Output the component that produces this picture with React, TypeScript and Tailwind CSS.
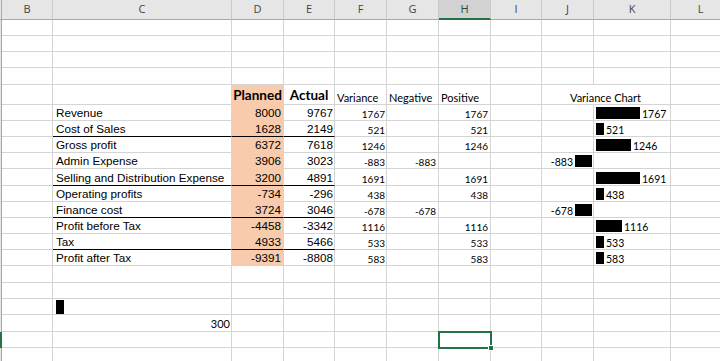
import React from "react";

type Line = { label: string; planned: number; actual: number; rule?: boolean };

const LINES: Line[] = [
  { label: "Revenue", planned: 8000, actual: 9767 },
  { label: "Cost of Sales", planned: 1628, actual: 2149, rule: true },
  { label: "Gross profit", planned: 6372, actual: 7618 },
  { label: "Admin Expense", planned: 3906, actual: 3023 },
  { label: "Selling and Distribution Expense", planned: 3200, actual: 4891, rule: true },
  { label: "Operating profits", planned: -734, actual: -296 },
  { label: "Finance cost", planned: 3724, actual: 3046, rule: true },
  { label: "Profit before Tax", planned: -4458, actual: -3342 },
  { label: "Tax", planned: 4933, actual: 5466, rule: true },
  { label: "Profit after Tax", planned: -9391, actual: -8808 },
];

// one block per 300 of variance
const SCALE = 300;

const LETTERS = ["", "B", "C", "D", "E", "F", "G", "H", "I", "J", "K", "L"];

const COL_W = [
  "w-[2px]",
  "w-[51px]",
  "w-[179px]",
  "w-[52px]",
  "w-[51px]",
  "w-[52px]",
  "w-[52px]",
  "w-[52px]",
  "w-[51px]",
  "w-[52px]",
  "w-[77px]",
  "w-[60px]",
];

const ROW_H = [
  "h-[16px]", "h-[16px]", "h-[16px]", "h-[17px]", "h-[20px]",
  "h-[16px]", "h-[16px]", "h-[16px]", "h-[16px]", "h-[17px]",
  "h-[16px]", "h-[16px]", "h-[16px]", "h-[16px]", "h-[16px]",
  "h-[17px]", "h-[16px]", "h-[16px]", "h-[17px]", "h-[16px]", "h-[16px]",
];

const ARIAL = "font-['Liberation_Sans',Arial,sans-serif] text-[11.7px] leading-none";
const CALIBRI = "font-['Lato',sans-serif] leading-none";

function Bar({ value }: { value: number }) {
  const blocks = Math.floor(Math.abs(value) / SCALE);
  return <div className="h-[12px] bg-black shrink-0" style={{ width: blocks * 9 - 1 }} />;
}

function cellContent(r: number, c: number): { node?: React.ReactNode; cls: string } {
  const line = r >= 5 && r <= 14 ? LINES[r - 5] : null;

  if (r === 4) {
    if (c === 3) return { node: <span className={`${CALIBRI} text-[13.5px] font-bold`}>Planned</span>, cls: "justify-center pb-[2px]" };
    if (c === 4) return { node: <span className={`${CALIBRI} text-[13.5px] font-bold`}>Actual</span>, cls: "justify-center pb-[2px]" };
    if (c === 5) return { node: <span className={`${CALIBRI} text-[11px]`}>Variance</span>, cls: "pl-[2px] pb-[1px]" };
    if (c === 6) return { node: <span className={`${CALIBRI} text-[11px]`}>Negative</span>, cls: "pl-[2px] pb-[1px]" };
    if (c === 7) return { node: <span className={`${CALIBRI} text-[11px]`}>Positive</span>, cls: "pl-[2px] pb-[1px]" };
    if (c === 9) return { node: <span className={`${CALIBRI} text-[11px] relative z-10`}>Variance Chart</span>, cls: "pl-[28px] pb-[1px]" };
  }

  if (line) {
    const v = line.actual - line.planned;
    if (c === 2) return { node: <span className={ARIAL}>{line.label}</span>, cls: "pl-[3px] pb-[1px]" };
    if (c === 3) return { node: <span className={ARIAL}>{line.planned}</span>, cls: "justify-end pr-[2px] pb-[1px]" };
    if (c === 4) return { node: <span className={ARIAL}>{line.actual}</span>, cls: "justify-end pr-[1px] pb-[1px]" };
    if (c === 5) return { node: <span className={`${CALIBRI} text-[10px]`}>{v}</span>, cls: "justify-end pr-[1px] pb-[1px]" };
    if (c === 6 && v < 0) return { node: <span className={`${CALIBRI} text-[10px]`}>{v}</span>, cls: "justify-end pr-[2px] pb-[1px]" };
    if (c === 7 && v >= 0) return { node: <span className={`${CALIBRI} text-[10px]`}>{v}</span>, cls: "justify-end pr-[2px] pb-[1px]" };
    if (c === 9 && v < 0)
      return {
        node: (
          <>
            <span className={`${CALIBRI} text-[10.5px]`}>{v}</span>
            <Bar value={v} />
          </>
        ),
        cls: "justify-end gap-[2px] pr-[1px] pb-[1px]",
      };
    if (c === 10 && v >= 0)
      return {
        node: (
          <>
            <Bar value={v} />
            <span className={`${CALIBRI} text-[10.5px]`}>{v}</span>
          </>
        ),
        cls: "gap-[2px] pl-[2px] pb-[1px]",
      };
  }

  if (r === 17 && c === 2) return { node: <div className="w-[8px] h-[14px] bg-black" />, cls: "pl-[3px]" };
  if (r === 18 && c === 2) return { node: <span className={`${CALIBRI} text-[11px]`}>{SCALE}</span>, cls: "justify-end pr-[1px] pb-[2px]" };

  return { cls: "" };
}

function BodyCell({ r, c }: { r: number; c: number }) {
  const line = r >= 5 && r <= 14 ? LINES[r - 5] : null;
  const peach = c === 3 && r >= 4 && r <= 14;

  if (c === 0) {
    const sel = r === 19;
    return (
      <div
        className={`${COL_W[0]} shrink-0 border-r ${
          sel ? "bg-[#217346] border-r-[#217346]" : "bg-[#e6e6e6] border-r-[#a8a8a8]"
        }`}
      />
    );
  }

  let right = "border-r-[#d4d4d4]";
  let bottom = "border-b-[#d4d4d4]";
  let bg = "";
  if (peach) {
    bg = "bg-[#f8cbad]";
    right = "border-r-[#f8cbad]";
    bottom = r === 14 ? "border-b-[#d4d4d4]" : "border-b-[#f8cbad]";
  }
  if (c === 2 && r >= 4 && r <= 14) right = "border-r-[#f8cbad]";
  if (line?.rule && c >= 2 && c <= 4) bottom = "border-b-black";
  if (r === 4 && c === 9) right = "border-r-transparent";

  const { node, cls } = cellContent(r, c);
  const selected = r === 19 && c === 7;

  return (
    <div
      className={`${COL_W[c]} shrink-0 relative flex items-end whitespace-nowrap text-black border-r border-b ${right} ${bottom} ${bg} ${cls}`}
    >
      {node}
      {selected && (
        <>
          <div className="absolute -left-[1px] -top-[1px] w-[54px] h-[18px] border-2 border-[#217346] z-10" />
          <div className="absolute left-[49px] top-[13px] w-[6px] h-[6px] bg-[#217346] border border-white z-20" />
        </>
      )}
    </div>
  );
}

export default function App() {
  return (
    <div className="w-[720px] h-[361px] overflow-hidden bg-white">
      {/* column letters */}
      <div className="flex h-[20px]">
        {LETTERS.map((l, c) => {
          const active = c === 7;
          return (
            <div
              key={c}
              className={`${COL_W[c]} shrink-0 flex items-center justify-center border-r font-['Open_Sans',sans-serif] text-[11px] ${
                c === 0 ? "border-r-[#a8a8a8]" : "border-r-[#cacaca]"
              } ${
                active
                  ? "bg-[#d2d2d2] border-b-2 border-b-[#217346] text-[#1e4d33]"
                  : "bg-[#e6e6e6] border-b border-b-[#a8a8a8] text-[#444]"
              }`}
            >
              {l}
            </div>
          );
        })}
      </div>

      {ROW_H.map((h, r) => (
        <div key={r} className={`flex ${h}`}>
          {LETTERS.map((_, c) => (
            <BodyCell key={c} r={r} c={c} />
          ))}
        </div>
      ))}
    </div>
  );
}
